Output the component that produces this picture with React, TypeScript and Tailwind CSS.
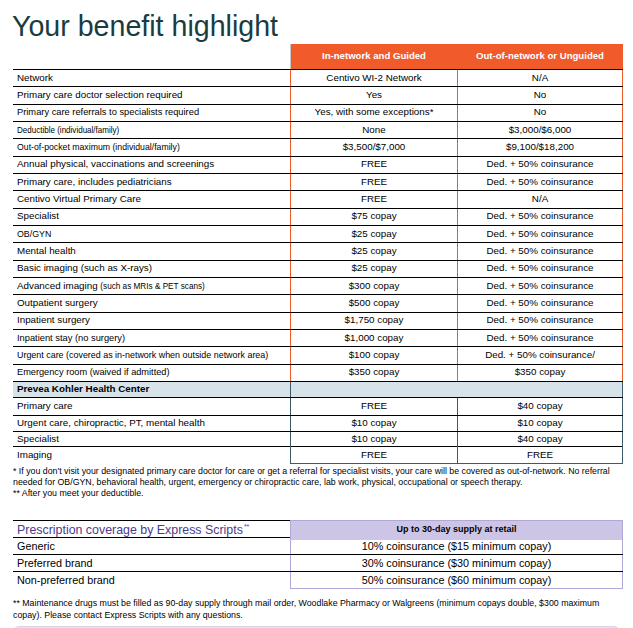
import React from 'react';

const ORANGE = 'border-[#f15a29]';

// label, in-network, out-of-network, horizontal squeeze of the label (the source PDF fits some labels tighter)
const mainRows: [React.ReactNode, string, string, string?][] = [
  ['Network', 'Centivo WI-2 Network', 'N/A'],
  ['Primary care doctor selection required', 'Yes', 'No'],
  ['Primary care referrals to specialists required', 'Yes, with some exceptions*', 'No', 'scale-x-[0.95]'],
  ['Deductible (individual/family)', 'None', '$3,000/$6,000', 'scale-x-[0.82]'],
  ['Out-of-pocket maximum (individual/family)', '$3,500/$7,000', '$9,100/$18,200', 'scale-x-[0.89]'],
  ['Annual physical, vaccinations and screenings', 'FREE', 'Ded. + 50% coinsurance'],
  ['Primary care, includes pediatricians', 'FREE', 'Ded. + 50% coinsurance'],
  ['Centivo Virtual Primary Care', 'FREE', 'N/A'],
  ['Specialist', '$75 copay', 'Ded. + 50% coinsurance'],
  ['OB/GYN', '$25 copay', 'Ded. + 50% coinsurance', 'scale-x-[0.9]'],
  ['Mental health', '$25 copay', 'Ded. + 50% coinsurance'],
  ['Basic imaging (such as X-rays)', '$25 copay', 'Ded. + 50% coinsurance'],
  [
    <>
      Advanced imaging <span className="text-[8.2px]">(such as MRIs &amp; PET scans)</span>
    </>,
    '$300 copay',
    'Ded. + 50% coinsurance',
  ],
  ['Outpatient surgery', '$500 copay', 'Ded. + 50% coinsurance'],
  ['Inpatient surgery', '$1,750 copay', 'Ded. + 50% coinsurance'],
  ['Inpatient stay (no surgery)', '$1,000 copay', 'Ded. + 50% coinsurance', 'scale-x-[0.95]'],
  [
    'Urgent care (covered as in-network when outside network area)',
    '$100 copay',
    'Ded. + 50% coinsurance/',
    'scale-x-[0.91]',
  ],
  ['Emergency room (waived if admitted)', '$350 copay', '$350 copay', 'scale-x-[0.94]'],
];

const preveaRows: [string, string, string, string][] = [
  ['Primary care', 'FREE', '$40 copay', 'h-[17px]'],
  ['Urgent care, chiropractic, PT, mental health', '$10 copay', '$10 copay', 'h-[16px]'],
  ['Specialist', '$10 copay', '$40 copay', 'h-[15px]'],
  ['Imaging', 'FREE', 'FREE', 'h-[18px]'],
];

const rxRows: [string, string, string][] = [
  ['Generic', '10% coinsurance ($15 minimum copay)', 'h-[17px]'],
  ['Preferred brand', '30% coinsurance ($30 minimum copay)', 'h-[17px]'],
  ['Non-preferred brand', '50% coinsurance ($60 minimum copay)', 'h-[18px]'],
];

const App: React.FC = () => {
  return (
    <div className="h-[628px] w-[633px] overflow-hidden bg-white text-black font-['Liberation_Sans',Arial,sans-serif]">
      <h1 className="pl-[12px] pt-[10px] text-[28.6px] leading-[32px] text-[#1a3c41]">Your benefit highlight</h1>

      {/* Main benefits table */}
      <div className="ml-[13px] mt-[2px] w-[610px] text-[9.8px]">
        <div className="grid h-[25px] grid-cols-[277px_167px_166px] text-[9.6px] font-bold text-white">
          <div />
          <div className="flex items-center justify-center border-l border-[#c8c8c8] bg-[#f15a29]">In-network and Guided</div>
          <div className="flex items-center justify-center bg-[#f15a29]">Out-of-network or Unguided</div>
        </div>

        {mainRows.map(([label, inNet, outNet, squeeze], i) => (
          <div key={i} className="grid h-[17.33px] grid-cols-[277px_167px_166px] border-t border-black">
            <div className="flex items-center whitespace-nowrap pl-[4px]">
              <span className={`inline-block origin-left ${squeeze ?? ''}`}>{label}</span>
            </div>
            <div className={`flex items-center justify-center border-l ${ORANGE}`}>{inNet}</div>
            <div className={`flex items-center justify-center border-x ${ORANGE}`}>{outNet}</div>
          </div>
        ))}

        <div className="grid h-[17px] grid-cols-[277px_333px] border-y border-black bg-[#d7e3e8] font-bold">
          <div className="flex items-center pl-[4px]">Prevea Kohler Health Center</div>
          <div className="border-x border-[#3f5966]" />
        </div>

        {preveaRows.map(([label, a, b, h], i) => (
          <div
            key={label}
            className={`grid grid-cols-[277px_167px_166px] ${h} ${i > 0 ? 'border-t border-black' : ''}`}
          >
            <div className="flex items-center whitespace-nowrap pl-[4px]">{label}</div>
            <div className={`flex items-center justify-center border-l border-[#3f5966] ${i === 3 ? 'border-b' : ''}`}>
              {a}
            </div>
            <div className={`flex items-center justify-center border-x border-[#3f5966] ${i === 3 ? 'border-b' : ''}`}>
              {b}
            </div>
          </div>
        ))}
      </div>

      <div className="ml-[13px] pt-[2px] text-[8.8px] leading-[11px] whitespace-nowrap">
        <p>
          * If you don't visit your designated primary care doctor for care or get a referral for specialist visits, your
          care will be covered as out-of-network. No referral
        </p>
        <p>
          needed for OB/GYN, behavioral health, urgent, emergency or chiropractic care, lab work, physical, occupational or
          speech therapy.
        </p>
        <p>** After you meet your deductible.</p>
      </div>

      {/* Prescription coverage */}
      <div className="ml-[13px] mt-[21px] w-[610px]">
        <div className="grid h-[17px] grid-cols-[277px_333px]">
          <div className="flex items-center border-t border-black pl-[4px] text-[12.4px] text-[#4b3b8e]">
            Prescription coverage by Express Scripts
            <span className="ml-[1px] self-start pt-[1px] text-[7px]">**</span>
          </div>
          <div className="flex items-center justify-center border-x border-t border-[#b1a7d8] bg-[#cdc5e6] text-[9px] font-bold">
            Up to 30-day supply at retail
          </div>
        </div>
        {rxRows.map(([label, value, h], i) => (
          <div key={label} className={`grid grid-cols-[277px_333px] border-t border-black text-[10.8px] ${h}`}>
            <div className="flex items-center pl-[4px]">{label}</div>
            <div
              className={`flex items-center justify-center border-x border-[#b1a7d8] ${i === 2 ? 'border-b' : ''}`}
            >
              {value}
            </div>
          </div>
        ))}
      </div>

      <div className="ml-[13px] mt-[8px] text-[8.8px] leading-[12px] whitespace-nowrap">
        <p>
          ** Maintenance drugs must be filled as 90-day supply through mail order, Woodlake Pharmacy or Walgreens (minimum
          copays double, $300 maximum
        </p>
        <p>copay). Please contact Express Scripts with any questions.</p>
      </div>

      <div className="mx-[13px] mt-[5px] h-[20px] rounded-t-[6px] border border-[#d6d3ec] bg-[#e6e4f4]" />
    </div>
  );
};

export default App;
